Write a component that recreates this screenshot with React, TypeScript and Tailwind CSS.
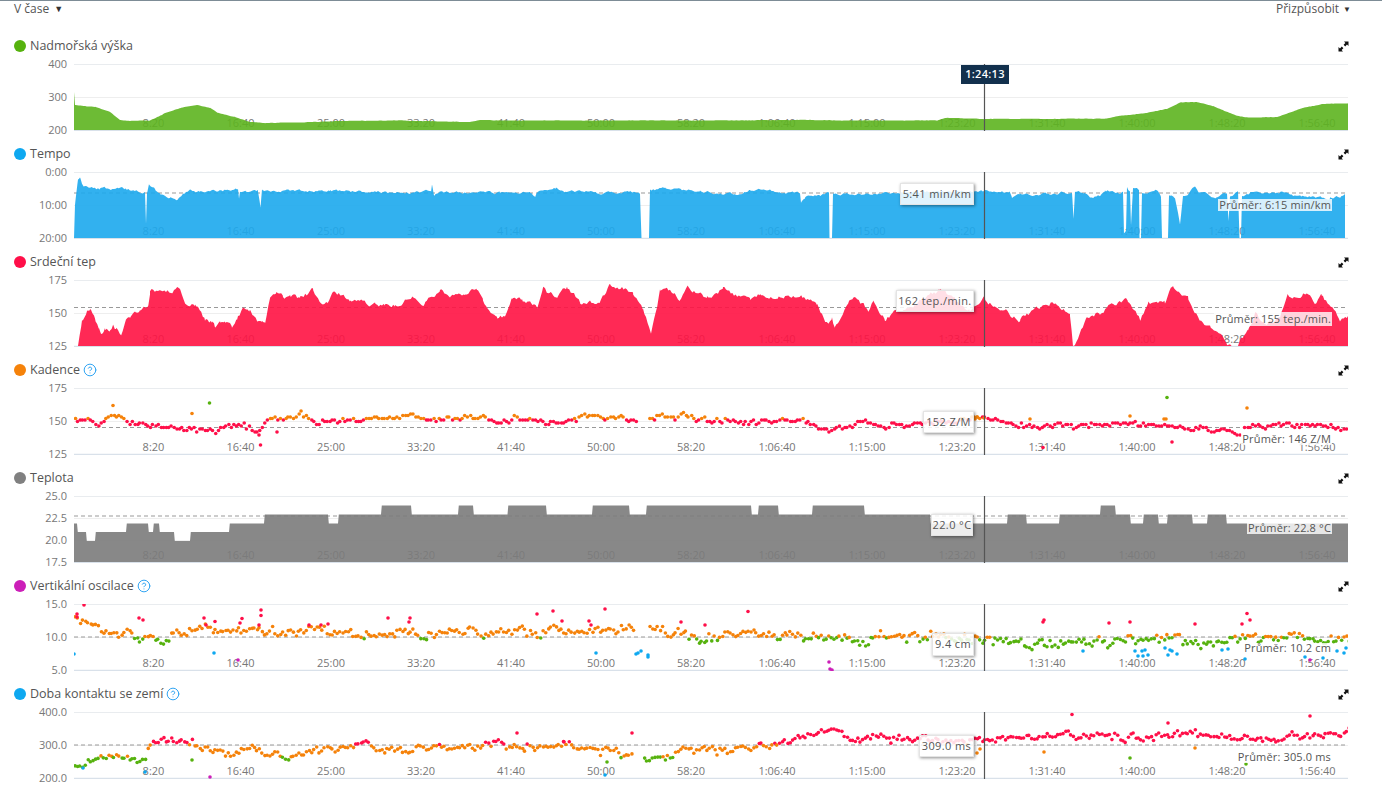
import { CircleHelp } from "lucide-react";

type Pt = [number, number];
type Dot = [number, number, string];

const GREEN = "#56b20e";
const BLUE = "#0ea8f0";
const RED = "#ff0f49";
const ORANGE = "#f5820a";
const GRAY = "#808080";
const MAGENTA = "#cc1fb8";

const PLOT_X = 74;
const PLOT_W = 1274;

const X_LABELS: [string, number][] = [
  ["8:20", 153.5], ["16:40", 240.5], ["25:00", 331], ["33:20", 421], ["41:40", 511],
  ["50:00", 601], ["58:20", 691], ["1:06:40", 777], ["1:15:00", 867], ["1:23:20", 957],
  ["1:31:40", 1047], ["1:40:00", 1137], ["1:48:20", 1227], ["1:56:40", 1317],
];

function rng(seed: number) {
  let a = seed;
  return () => {
    a = (a + 0x6d2b79f5) | 0;
    let t = Math.imul(a ^ (a >>> 15), 1 | a);
    t = (t + Math.imul(t ^ (t >>> 7), 61 | t)) ^ t;
    return ((t ^ (t >>> 14)) >>> 0) / 4294967296;
  };
}

function lerp(pts: Pt[], x: number) {
  if (x <= pts[0][0]) return pts[0][1];
  for (let i = 1; i < pts.length; i++) {
    if (x <= pts[i][0]) {
      const [x0, y0] = pts[i - 1];
      const [x1, y1] = pts[i];
      return y0 + ((y1 - y0) * (x - x0)) / (x1 - x0 || 1);
    }
  }
  return pts[pts.length - 1][1];
}

// control points are page pixels, top is the plot's page y
function areaPath(pts: Pt[], top: number, jitter: number, seed: number) {
  const r = rng(seed);
  const bottom = 66;
  const xs = new Set<number>(pts.map((p) => p[0]));
  for (let x = pts[0][0]; x < pts[pts.length - 1][0]; x += 1.6) xs.add(x);
  const sorted = [...xs].sort((a, b) => a - b);
  let drift = 0;
  let d = `M${pts[0][0] - PLOT_X} ${bottom}`;
  for (const x of sorted) {
    drift = drift * 0.72 + (r() - 0.5) * jitter;
    const base = lerp(pts, x) - top;
    const y = base >= 64 ? bottom : Math.min(base + drift, bottom);
    d += `L${(x - PLOT_X).toFixed(1)} ${y.toFixed(1)}`;
  }
  return d + `L${pts[pts.length - 1][0] - PLOT_X} ${bottom}Z`;
}

function stepPath(steps: [number, number][], end: number, top: number) {
  let d = `M0 66`;
  steps.forEach(([x, y], i) => {
    const nx = i + 1 < steps.length ? steps[i + 1][0] : end;
    d += `L${x - PLOT_X + (i ? 0.8 : 0)} ${y - top}L${nx - PLOT_X} ${y - top}`;
  });
  return d + `L${end - PLOT_X} 66Z`;
}

function scatter(
  base: Pt[],
  spread: number,
  quant: number,
  seed: number,
  color: (y: number, x: number) => string,
  skip: [number, number][],
  extra: Dot[],
): Dot[] {
  const r = rng(seed);
  const out: Dot[] = [];
  let drift = 0;
  for (let x = 75; x < 1349; x += 2.6) {
    drift = drift * 0.6 + (r() - 0.5) * spread;
    if (skip.some(([a, b]) => x > a && x < b)) continue;
    let y = lerp(base, x) + drift + (r() - 0.5) * spread * 0.8;
    if (quant) y = Math.round(y / quant) * quant;
    out.push([x + (r() - 0.5) * 1.2, y, color(y, x)]);
  }
  return out.concat(extra);
}

const elevation: Pt[] = [
  [74, 92], [75, 105], [95, 107], [110, 112], [120, 120], [130, 121], [150, 120.5], [165, 113], [180, 108],
  [197, 105], [210, 108], [218, 113], [235, 117], [250, 122], [265, 123], [300, 122.5], [340, 121], [400, 120.5],
  [440, 121.5], [470, 122], [480, 120], [500, 120.5], [600, 120.5], [700, 120.5], [800, 120], [860, 120.5],
  [937, 120.5], [945, 118], [975, 118.5], [985, 119], [1107, 118.5], [1120, 116], [1147, 113], [1167, 109],
  [1180, 102.5], [1197, 102], [1213, 106], [1237, 116], [1250, 117.5], [1277, 117], [1303, 108], [1323, 104],
  [1348, 103],
];

const tempo: Pt[] = [
  [74, 238], [75, 205], [78, 179], [80, 177], [83, 186], [100, 189], [125, 189], [141, 192], [145, 192], [146, 222],
  [147, 192], [149, 184], [155, 188], [160, 194], [170, 197], [178, 199], [183, 195], [190, 190], [200, 192],
  [238, 189], [239, 199], [240, 192], [258, 191], [260.5, 207], [262, 190], [300, 191], [330, 191], [400, 193],
  [431, 192], [432, 185], [434, 195], [440, 192], [500, 193], [530, 193], [535, 197], [537, 192], [556, 188],
  [565, 191], [600, 193], [630, 191], [640, 194], [641.5, 238], [649, 238], [650, 190], [665, 189], [700, 191],
  [740, 195], [750, 190], [790, 192], [800, 193], [801, 202], [805, 197], [820, 196], [829, 193], [829.5, 238],
  [832, 238], [833, 193], [860, 194], [900, 193], [984, 191], [1010, 192], [1012, 198], [1020, 195], [1060, 193],
  [1072, 192], [1073.5, 218], [1075, 192], [1085, 193], [1090, 197], [1100, 195], [1105, 190], [1120, 192],
  [1123, 190], [1124, 232], [1126, 232], [1127, 188], [1130, 192], [1131, 225], [1133, 190], [1137, 189],
  [1139, 192], [1139.5, 238], [1141, 238], [1142, 192], [1150, 190], [1158, 190], [1161, 195], [1162, 238],
  [1168, 238], [1169, 195], [1175, 198], [1180, 225], [1183, 195], [1190, 192], [1195, 186], [1198, 191],
  [1215, 197], [1225, 192], [1227, 193], [1228.5, 220], [1230, 195], [1238, 190], [1239.5, 238], [1241, 238],
  [1242, 196], [1250, 194], [1280, 193], [1300, 197], [1330, 198], [1340, 197], [1345, 194],
];

const heart: Pt[] = [
  [78, 346], [82, 323], [87, 313], [90, 312], [95, 318], [99, 328], [101, 333], [105, 329], [110, 329], [113, 325],
  [116, 331], [121, 335], [125, 321], [130, 317], [135, 311], [140, 309], [145, 304], [148, 303], [150, 290],
  [160, 291], [170, 291], [180, 288], [186, 300], [195, 302], [200, 310], [205, 320], [212, 323], [215, 327],
  [220, 325], [225, 320], [232, 328], [237, 318], [243, 308], [250, 312], [255, 318], [262, 325], [265, 322],
  [270, 300], [276, 297], [283, 295], [290, 297], [300, 298], [313, 291], [320, 300], [327, 301], [333, 293],
  [340, 294], [350, 299], [365, 300], [375, 305], [385, 304], [395, 305], [405, 301], [415, 297], [425, 301],
  [440, 291], [450, 298], [460, 298], [465, 295], [472, 285], [477, 286], [483, 300], [493, 317], [497, 316],
  [505, 317], [512, 298], [522, 300], [530, 305], [537, 309], [543, 291], [550, 296], [557, 300], [567, 290],
  [580, 302], [600, 301], [610, 286], [633, 292], [643, 312], [651, 334], [660, 291], [667, 288], [680, 298],
  [688, 288], [707, 298], [723, 288], [750, 302], [760, 294], [777, 296], [803, 298], [817, 305], [828, 323],
  [832, 315], [835, 327], [848, 302], [853, 298], [868, 310], [873, 301], [885, 319], [897, 312], [915, 305],
  [940, 290], [955, 300], [970, 311], [985, 298], [1000, 309], [1020, 320], [1035, 310], [1050, 302], [1070, 315],
  [1073, 346], [1087, 318], [1100, 312], [1113, 301], [1128, 301], [1140, 318], [1148, 302], [1165, 304],
  [1173, 287], [1188, 300], [1195, 318], [1210, 330], [1227, 343], [1237, 346], [1248, 330], [1255, 314],
  [1265, 326], [1280, 318], [1288, 296], [1303, 292], [1315, 302], [1322, 296], [1340, 320], [1348, 315],
];

const L5 = 505.5;
const L4 = 514.5;
const L3 = 523.5;
const L2 = 532;
const L1 = 541;
const tempSteps: [number, number][] = [
  [74, L3], [77, L2], [86, L1], [95, L2], [126, L3], [148, L2], [153, L3], [159, L2], [174, L1], [190, L2], [229, L3],
  [264, L4], [328, L3], [338, L4], [381, L5], [411, L4], [458, L5], [473, L4], [507.5, L5], [546, L4], [592, L5],
  [629, L4], [646, L5], [751, L4], [758, L5], [778, L4], [812, L5], [864, L4], [930, L3], [1007, L4], [1026, L3],
  [1059, L4], [1100, L5], [1115, L4], [1130, L3], [1143, L4], [1158, L3], [1167, L4], [1192, L3], [1207, L4],
  [1226, L3],
];

const cadence = scatter(
  [
    [74, 422], [82, 421], [85, 419], [92, 419], [97, 428], [100, 424], [105, 417], [112, 416], [125, 417], [130, 422],
    [140, 421], [150, 426], [180, 428], [200, 431], [205, 428], [215, 431], [225, 425], [240, 424], [250, 428],
    [258, 431], [265, 422], [275, 417], [300, 415], [315, 421], [330, 423], [340, 419], [400, 417.5], [420, 417],
    [440, 420], [470, 418], [500, 421], [530, 419], [560, 423], [570, 419], [585, 416], [620, 417], [636, 422],
    [648, 416], [690, 416], [700, 421], [720, 423], [800, 420], [810, 423], [830, 430], [850, 424], [900, 425],
    [920, 424], [975, 419], [1000, 423], [1060, 427], [1100, 426], [1140, 423], [1170, 425], [1200, 428],
    [1210, 431], [1235, 433], [1240, 438], [1245, 427], [1275, 425], [1348, 428],
  ],
  4,
  1.5,
  7,
  (y, x) => (y < 419.4 && x < 980 ? ORANGE : RED),
  [[637, 648], [1240, 1244]],
  [
    [113, 405.5, ORANGE], [192, 413.5, ORANGE], [209.5, 403, GREEN], [260.5, 445, RED], [277, 432, RED], [259, 435, RED],
    [1167, 397.5, GREEN], [1247, 408, ORANGE], [1130, 416, ORANGE], [1164, 419, ORANGE], [1166, 419, ORANGE],
    [1172, 442, RED], [1043, 447.5, RED], [1030, 419, ORANGE], [977, 417, ORANGE], [975, 419, ORANGE], [984, 418, ORANGE],
  ],
);

const oscillation = scatter(
  [
    [78, 622], [95, 627], [120, 630], [140, 640], [165, 640], [180, 636], [205, 630], [240, 629], [300, 632], [350, 635],
    [400, 634], [500, 632], [560, 632], [636, 630], [650, 630], [700, 635], [800, 635], [830, 640], [880, 640],
    [940, 636], [1000, 640], [1040, 645], [1100, 640], [1160, 640], [1200, 643], [1280, 640], [1348, 643],
  ],
  7,
  0,
  23,
  (y) => (y < 637.5 ? ORANGE : y < 654 ? GREEN : BLUE),
  [[636, 648]],
  [
    [84, 605, RED], [77, 614, RED], [77, 617, RED], [139, 618, RED], [143, 620, RED], [204, 618, RED], [206, 625, RED],
    [215, 621.5, RED], [240, 623, RED], [242, 618.5, RED], [259, 625, RED], [261, 610, RED], [261, 615.5, RED],
    [309, 625, RED], [321, 625, RED], [328, 624, RED], [388, 618, RED], [410, 618, RED], [409, 622, RED],
    [537, 614, RED], [553, 611, RED], [562, 621, RED], [589, 621, RED], [591, 625, RED], [605, 609, RED],
    [681, 622, RED], [705, 625, RED], [748, 611.5, RED], [1044, 620, RED], [1043, 622, RED], [1109, 623, RED],
    [1130, 622, RED], [1195, 624, RED], [1242, 624, RED], [1247, 613.5, RED], [1250, 620, RED],
    [74, 654, BLUE], [214, 653, BLUE], [596, 653, BLUE], [636, 654, BLUE], [638, 653, BLUE], [641, 651, BLUE],
    [648, 655, BLUE], [648, 657, BLUE], [1083, 651, BLUE], [1135, 651, BLUE], [1138, 656, BLUE], [1143, 656, BLUE],
    [1142, 651, BLUE], [1148, 655, BLUE], [1145, 650, BLUE], [1165, 648, BLUE], [1168, 655, BLUE], [1170, 650, BLUE],
    [1172, 651, BLUE], [1177, 654, BLUE], [1222, 650, BLUE], [1228, 649, BLUE], [1245, 659, BLUE], [1305, 657, BLUE],
    [1323, 658, BLUE], [1337, 651, BLUE], [1344, 653, BLUE], [1346, 648, BLUE],
    [238, 660, MAGENTA], [829, 662, MAGENTA], [830, 669, MAGENTA], [832, 670, MAGENTA], [1310, 660, MAGENTA],
  ],
);

const contact = scatter(
  [
    [74, 764], [100, 760], [115, 758], [145, 760], [148, 745], [170, 741], [195, 744], [200, 750], [230, 753], [250, 745],
    [265, 752], [285, 755], [310, 755], [325, 750], [370, 744], [400, 750], [420, 748], [470, 745], [500, 743],
    [530, 747], [560, 745], [600, 750], [640, 757], [670, 758], [685, 747], [720, 750], [770, 745], [800, 738],
    [815, 732], [860, 737], [980, 740], [1000, 737], [1048, 737], [1100, 735], [1140, 737], [1190, 735], [1240, 739],
    [1300, 737], [1348, 733],
  ],
  5.6,
  0,
  41,
  (y) => (y < 744.5 ? RED : y < 757 ? ORANGE : GREEN),
  [[634, 642]],
  [
    [83, 768, BLUE], [145, 772, BLUE], [210, 777, MAGENTA], [192, 760, GREEN], [605, 775, BLUE], [607, 762, GREEN],
    [1072, 714.5, RED], [1310, 716, RED], [1168, 723, RED], [1044, 752, ORANGE], [1195, 748, ORANGE], [1130, 758, GREEN],
    [1246, 764, GREEN], [977, 753, ORANGE], [980, 749, ORANGE], [517, 733, RED], [564, 742, RED], [632, 733, RED],
  ],
);

type Chart = {
  title: string;
  dot: string;
  help?: boolean;
  ticks: string[];
  fill?: string;
  path?: (top: number) => string;
  dots?: Dot[];
  avgY?: number;
  tip?: { text: string; className: string };
  avg?: { text: string; className: string };
};

const charts: Chart[] = [
  {
    title: "Nadmořská výška",
    dot: GREEN,
    ticks: ["400", "300", "200"],
    fill: "#5db41f",
    path: (top) => areaPath(elevation, top, 0.3, 1),
  },
  {
    title: "Tempo",
    dot: BLUE,
    ticks: ["0:00", "10:00", "20:00"],
    fill: "#1ca9ed",
    path: (top) => areaPath(tempo, top, 2.2, 2),
    avgY: 193,
    tip: { text: "5:41 min/km", className: "left-[826px] top-[11px] w-[74px] h-[22px]" },
    avg: { text: "Průměr: 6:15 min/km", className: "right-[16px] top-[27px] h-[12px]" },
  },
  {
    title: "Srdeční tep",
    dot: RED,
    ticks: ["175", "150", "125"],
    fill: "#ff1242",
    path: (top) => areaPath(heart, top, 4.5, 3),
    avgY: 307.5,
    tip: { text: "162 tep./min.", className: "left-[822px] top-[10px] w-[78px] h-[22px]" },
    avg: { text: "Průměr: 155 tep./min.", className: "right-[16px] top-[32px] h-[14px]" },
  },
  {
    title: "Kadence",
    dot: ORANGE,
    help: true,
    ticks: ["175", "150", "125"],
    dots: cadence,
    avgY: 427.5,
    tip: { text: "152 Z/M", className: "left-[849px] top-[23px] w-[51px] h-[22px]" },
    avg: { text: "Průměr: 146 Z/M", className: "right-[16px] top-[45px] h-[12px]" },
  },
  {
    title: "Teplota",
    dot: GRAY,
    ticks: ["25.0", "22.5", "20.0", "17.5"],
    fill: "#7b7b7b",
    path: (top) => stepPath(tempSteps, 1348, top),
    avgY: 516,
    tip: { text: "22.0 °C", className: "left-[857px] top-[18px] w-[42px] h-[22px]" },
    avg: { text: "Průměr: 22.8 °C", className: "right-[16px] top-[26px] h-[12px]" },
  },
  {
    title: "Vertikální oscilace",
    dot: MAGENTA,
    help: true,
    ticks: ["15.0", "10.0", "5.0"],
    dots: oscillation,
    avgY: 637,
    tip: { text: "9.4 cm", className: "left-[858px] top-[29px] w-[42px] h-[23px]" },
    avg: { text: "Průměr: 10.2 cm", className: "right-[16px] top-[39px] h-[11px]" },
  },
  {
    title: "Doba kontaktu se zemí",
    dot: BLUE,
    help: true,
    ticks: ["400.0", "300.0", "200.0"],
    dots: contact,
    avgY: 745,
    tip: { text: "309.0 ms", className: "left-[845px] top-[23px] w-[55px] h-[22px]" },
    avg: { text: "Průměr: 305.0 ms", className: "right-[16px] top-[39px] h-[12px]" },
  },
];

function ExpandIcon() {
  return (
    <svg width="11" height="11" viewBox="0 0 11 11" className="block">
      <path d="M6 0.5H10.5V5L9 3.6L7.2 5.4L5.6 3.8L7.4 2Z" fill="#111" />
      <path d="M5 10.5H0.5V6L2 7.4L3.8 5.6L5.4 7.2L3.6 9Z" fill="#111" />
    </svg>
  );
}

function Plot({ chart, top, first }: { chart: Chart; top: number; first: boolean }) {
  const mid = chart.ticks.length === 4 ? [22.5, 44.5] : [33.5];
  return (
    <div className="relative w-[1274px] h-[67px]">
      <svg width={PLOT_W} height={67} viewBox={`0 0 ${PLOT_W} 67`} className="block">
        <line x1="0" x2={PLOT_W} y1="0.5" y2="0.5" stroke="#e9ecef" strokeWidth="1.2" />
        {mid.map((y) => (
          <line key={y} x1="0" x2={PLOT_W} y1={y} y2={y} stroke="#eeeeee" />
        ))}
        <line x1="0" x2={PLOT_W} y1="66.5" y2="66.5" stroke="#d9e1ea" strokeWidth="1.5" />
        {chart.avgY !== undefined && (
          <line
            x1="0"
            x2={PLOT_W}
            y1={chart.avgY - top}
            y2={chart.avgY - top}
            stroke="#999999"
            strokeDasharray="4 3"
          />
        )}
        {X_LABELS.map(([label, x]) => (
          <text
            key={label}
            x={x - PLOT_X}
            y="63"
            textAnchor="middle"
            className="fill-[#777777] text-[11px]"
          >
            {label}
          </text>
        ))}
        {chart.path && <path d={chart.path(top)} fill={chart.fill} opacity="0.9" />}
        {chart.dots?.map(([x, y, color], i) => (
          <circle key={i} cx={x - PLOT_X} cy={y - top} r="1.8" fill={color} />
        ))}
        <line x1="910.5" x2="910.5" y1="0" y2="67" stroke="#555555" strokeWidth="1.2" />
      </svg>

      {first && (
        <div className="absolute left-[887px] top-[1px] w-[48px] h-[19px] flex items-center justify-center bg-[#12304d] text-white text-[11px] font-semibold tracking-[0.3px]">
          1:24:13
        </div>
      )}
      {chart.tip && (
        <div
          className={`absolute flex items-center justify-center bg-white/85 border border-[#e4e4e4] shadow-[1px_1px_3px_rgba(0,0,0,0.45)] text-[11px] tracking-[0.4px] text-[#555555] whitespace-nowrap ${chart.tip.className}`}
        >
          {chart.tip.text}
        </div>
      )}
      {chart.avg && (
        <div
          className={`absolute flex items-center px-[1px] bg-white/80 text-[11px] tracking-[0.15px] text-[#555555] whitespace-nowrap ${chart.avg.className}`}
        >
          {chart.avg.text}
        </div>
      )}
    </div>
  );
}

export default function App() {
  return (
    <div className="w-[1382px] h-[810px] overflow-hidden bg-white font-['Open_Sans',sans-serif] text-[#555555]">
      {/* Top toolbar */}
      <div className="h-[38px] border-t border-[#7d8c96] flex items-start justify-between pl-[14px] pr-[31px] text-[12px] leading-[14px]">
        <div className="flex items-center pt-[1px]">
          V čase
          <span className="ml-[5px] text-[9px] leading-[14px] text-[#333333]">▼</span>
        </div>
        <div className="flex items-center pt-[1px]">
          Přizpůsobit
          <span className="ml-[4px] text-[8px] leading-[14px] text-[#333333]">▼</span>
        </div>
      </div>

      {charts.map((chart, i) => (
        <section key={chart.title} className="h-[108px]">
          <div className="h-[16px] mb-[10px] flex items-center justify-between pl-[14px] pr-[33px]">
            <div className="flex items-center text-[12.5px] leading-[16px]">
              <span className="w-[12px] h-[12px] rounded-full mr-[4px]" style={{ background: chart.dot }} />
              {chart.title}
              {chart.help && <CircleHelp className="ml-[3px] w-[14px] h-[14px] text-[#2ea3f2]" strokeWidth={1.7} />}
            </div>
            <ExpandIcon />
          </div>
          <div className="flex h-[67px]">
            <div className="w-[74px] pr-[7px] -mt-[8px] -mb-[7px] flex flex-col justify-between text-right text-[11px] leading-[16px] text-[#777777]">
              {chart.ticks.map((t) => (
                <span key={t}>{t}</span>
              ))}
            </div>
            <Plot chart={chart} top={64 + 108 * i} first={i === 0} />
          </div>
        </section>
      ))}
    </div>
  );
}
